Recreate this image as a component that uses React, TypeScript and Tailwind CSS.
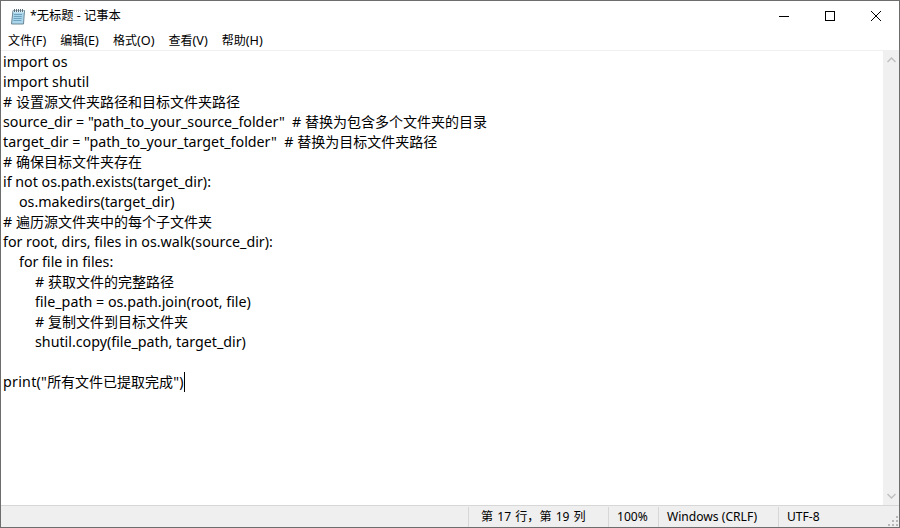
const base = "font-['Noto_Sans','Noto_Sans_CJK_SC',sans-serif]"

type Line = { text: string; indent?: 'one' | 'two' }

const codeLines: Line[] = [
  { text: 'import os' },
  { text: 'import shutil' },
  { text: '# 设置源文件夹路径和目标文件夹路径' },
  { text: 'source_dir = "path_to_your_source_folder"  # 替换为包含多个文件夹的目录' },
  { text: 'target_dir = "path_to_your_target_folder"  # 替换为目标文件夹路径' },
  { text: '# 确保目标文件夹存在' },
  { text: 'if not os.path.exists(target_dir):' },
  { text: 'os.makedirs(target_dir)', indent: 'one' },
  { text: '# 遍历源文件夹中的每个子文件夹' },
  { text: 'for root, dirs, files in os.walk(source_dir):' },
  { text: 'for file in files:', indent: 'one' },
  { text: '# 获取文件的完整路径', indent: 'two' },
  { text: 'file_path = os.path.join(root, file)', indent: 'two' },
  { text: '# 复制文件到目标文件夹', indent: 'two' },
  { text: 'shutil.copy(file_path, target_dir)', indent: 'two' },
  { text: '' },
]

const menus = ['文件(F)', '编辑(E)', '格式(O)', '查看(V)', '帮助(H)']

// latin runs come out a bit wider than the cjk ones in the original
function Mixed({ text, cjk }: { text: string; cjk: string }) {
  const parts = text.split(/([\u4e00-\u9fff]+)/)
  return (
    <>
      {parts.map((p, i) => (i % 2 === 1 ? <span key={i} className={cjk}>{p}</span> : <span key={i}>{p}</span>))}
    </>
  )
}

function NotepadIcon() {
  return (
    <svg width="16" height="17" viewBox="0 0 16 17">
      <path d="M3 2.500h11.500l-1 13.500H1.500z" fill="#a9d6ec" stroke="#6b8795" strokeWidth="1" />
      <path d="M3.500 2.500h10.500v2H3.300z" fill="#dff0f8" />
      <path d="M4.500 1v3M6.500 1v3M8.500 1v3M10.500 1v3M12.500 1v3" stroke="#5c6f7a" strokeWidth="1" />
      <path d="M4 6.500h8M3.800 8.500h8M3.600 10.500h8M3.400 12.500h8" stroke="#6fa3bd" strokeWidth="1" />
    </svg>
  )
}

function WindowButtons() {
  return (
    <div className="flex h-full items-center">
      <div className="flex h-full w-[46px] items-center justify-center">
        <svg width="10" height="10" viewBox="0 0 10 10"><path d="M0 5.500h10" stroke="#000" strokeWidth="1" /></svg>
      </div>
      <div className="flex h-full w-[46px] items-center justify-center">
        <svg width="10" height="10" viewBox="0 0 10 10"><rect x="0.500" y="0.500" width="9" height="9" fill="none" stroke="#000" strokeWidth="1" /></svg>
      </div>
      <div className="flex h-full w-[46px] items-center justify-center">
        <svg width="10" height="10" viewBox="0 0 10 10"><path d="M0 0l10 10M10 0L0 10" stroke="#000" strokeWidth="1" /></svg>
      </div>
    </div>
  )
}

export default function App() {
  return (
    <div className={`flex h-[528px] w-[900px] flex-col overflow-hidden border border-[#6d6d6d] bg-white text-black ${base}`}>
      {/* title bar */}
      <div className="flex h-[29px] shrink-0 items-center justify-between pl-[9px]">
        <div className="flex items-center gap-[4px] pt-[2px] text-[12.3px]">
          <NotepadIcon />
          <span>*无标题 - 记事本</span>
        </div>
        <WindowButtons />
      </div>

      {/* menu */}
      <div className="flex h-[20px] shrink-0 items-center gap-[14px] pt-[2px] pl-[7px] text-[12.7px]">
        {menus.map((m) => (
          <span key={m}><Mixed text={m} cjk="text-[12px]" /></span>
        ))}
      </div>

      {/* editor */}
      <div className="flex min-h-0 flex-1 border-t border-t-[#f0f0f0]">
        <div className="min-w-0 flex-1 whitespace-pre pt-px pl-[2px] text-[14.25px] leading-[20px]">
          {codeLines.map((line, i) => (
            <div key={i} className={`h-[20px] ${line.indent === 'one' ? 'pl-[16px]' : line.indent === 'two' ? 'pl-[32px]' : ''}`}>
              <Mixed text={line.text} cjk="text-[14px]" />
            </div>
          ))}
          <div className="flex h-[20px] items-start tracking-[0.25px]">
            <span><Mixed text={'print("所有文件已提取完成")'} cjk="text-[14px] tracking-normal" /></span>
            <span className="h-[20px] w-px bg-black" />
          </div>
        </div>
        <div className="flex w-[16px] shrink-0 flex-col items-center justify-between bg-[#f0f0f0] py-[6px]">
          <svg width="9" height="6" viewBox="0 0 9 6"><path d="M0.500 5L4.500 1L8.500 5" fill="none" stroke="#c0c0c0" strokeWidth="1.500" /></svg>
          <svg width="9" height="6" viewBox="0 0 9 6"><path d="M0.500 1L4.500 5L8.500 1" fill="none" stroke="#c0c0c0" strokeWidth="1.500" /></svg>
        </div>
      </div>

      {/* status bar */}
      <div className="relative flex h-[22px] shrink-0 items-stretch border-t border-t-[#d7d7d7] bg-[#efefef] text-[12.1px]">
        <div className="flex-1" />
        <div className="mt-px flex w-[140px] items-center whitespace-pre border-l border-l-[#d7d7d7] pl-[12px] [word-spacing:1px]">第 17 行，第 19 列</div>
        <div className="mt-px flex w-[50px] items-center border-l border-l-[#d7d7d7] pl-[8px]">100%</div>
        <div className="mt-px flex w-[120px] items-center border-l border-l-[#d7d7d7] pl-[8px]">Windows (CRLF)</div>
        <div className="mt-px flex w-[121px] items-center border-l border-l-[#d7d7d7] pl-[8px]">UTF-8</div>
        <svg className="absolute right-0 bottom-0" width="12" height="12" viewBox="0 0 12 12" fill="#b8b8b8">
          <rect x="9" y="1" width="2" height="2" />
          <rect x="5" y="5" width="2" height="2" />
          <rect x="9" y="5" width="2" height="2" />
          <rect x="1" y="9" width="2" height="2" />
          <rect x="5" y="9" width="2" height="2" />
          <rect x="9" y="9" width="2" height="2" />
        </svg>
      </div>
    </div>
  )
}
